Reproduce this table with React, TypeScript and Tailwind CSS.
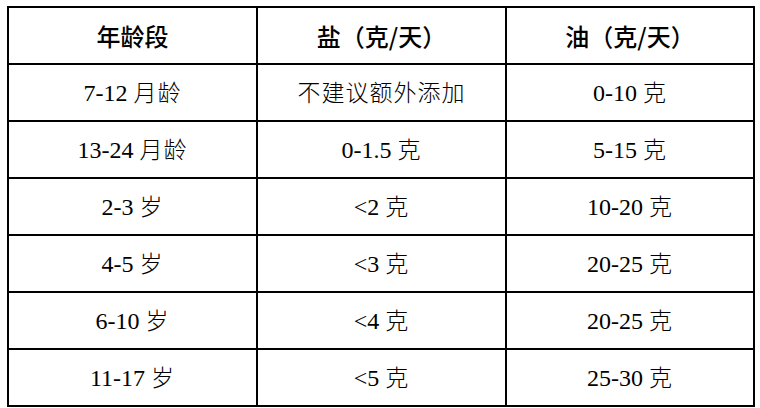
import React from "react";

// 每一行：年龄段 / 盐 / 油
const data = [
  { age: "7-12", ageUnit: "月龄", salt: "", saltUnit: "不建议额外添加", oil: "0-10" },
  { age: "13-24", ageUnit: "月龄", salt: "0-1.5", saltUnit: "克", oil: "5-15" },
  { age: "2-3", ageUnit: "岁", salt: "<2", saltUnit: "克", oil: "10-20" },
  { age: "4-5", ageUnit: "岁", salt: "<3", saltUnit: "克", oil: "20-25" },
  { age: "6-10", ageUnit: "岁", salt: "<4", saltUnit: "克", oil: "20-25" },
  { age: "11-17", ageUnit: "岁", salt: "<5", saltUnit: "克", oil: "25-30" },
];

const Cell: React.FC<{ num: string; unit: string }> = ({ num, unit }) => (
  <td className="border-2 border-black h-[57px] p-0 text-center align-middle text-[24px] leading-none font-normal text-black font-[Liberation_Serif,Noto_Sans_CJK_SC,serif]">
    {num}
    {num && " "}
    <span className="text-[23px] font-light tracking-[1px] font-[Noto_Sans_CJK_SC,sans-serif]">
      {unit}
    </span>
  </td>
);

const Head: React.FC<{ children: React.ReactNode }> = ({ children }) => (
  <th className="border-2 border-black h-[57px] p-0 text-center align-middle font-medium">
    {children}
  </th>
);

export default function App() {
  return (
    <div className="w-[760px] h-[408px] bg-white pl-[7px] pt-[6px]">
      <table className="border-collapse table-fixed w-[746px]">
        <colgroup>
          <col className="w-[249px]" />
          <col className="w-[249px]" />
          <col className="w-[248px]" />
        </colgroup>
        <thead>
          <tr className="font-[Noto_Sans_CJK_SC,sans-serif] text-[24px] leading-none text-black">
            <Head>年龄段</Head>
            <Head>盐（克/天）</Head>
            <Head>油（克/天）</Head>
          </tr>
        </thead>
        <tbody>
          {data.map((r) => (
            <tr key={r.age}>
              <Cell num={r.age} unit={r.ageUnit} />
              <Cell num={r.salt} unit={r.saltUnit} />
              <Cell num={r.oil} unit="克" />
            </tr>
          ))}
        </tbody>
      </table>
    </div>
  );
}
